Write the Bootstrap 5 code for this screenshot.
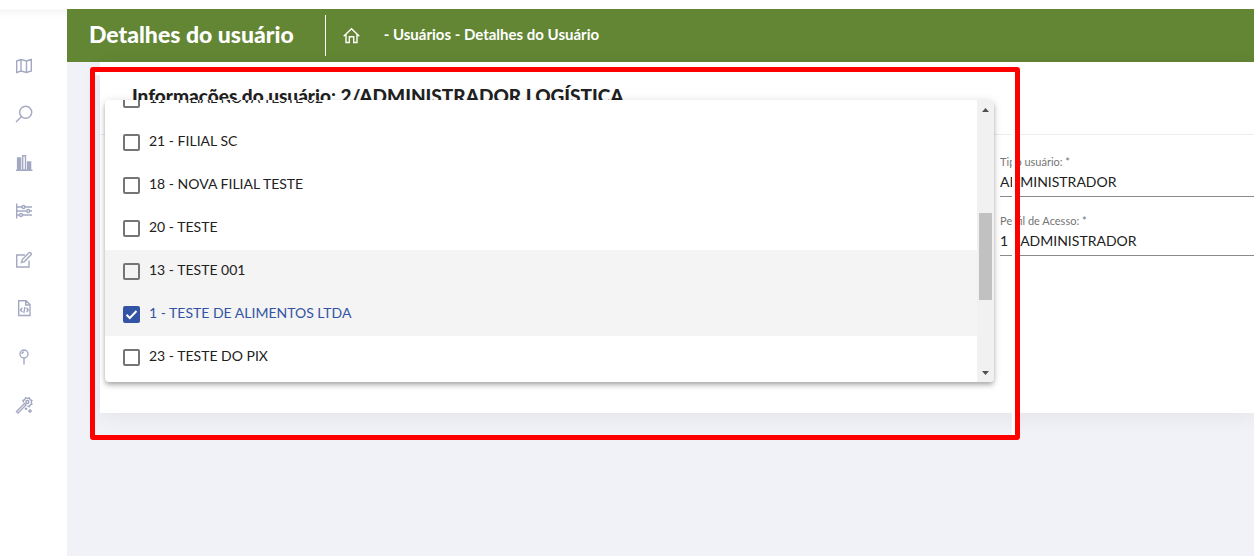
<!DOCTYPE html>
<html lang="pt-BR">
<head>
<meta charset="utf-8">
<meta name="viewport" content="width=device-width, initial-scale=1">
<title>Detalhes do usuário</title>
<link href="https://cdn.jsdelivr.net/npm/bootstrap@5.3.0/dist/css/bootstrap.min.css" rel="stylesheet">
<script src="https://cdn.jsdelivr.net/npm/bootstrap@5.3.0/dist/js/bootstrap.bundle.min.js" defer></script>
<style>
  body { font-family: Lato, "Liberation Sans", sans-serif; color: #212121; background: #f1f2f7; }
  .app { min-height: 100vh; }
  .side { width: 67px; padding: 57px 0 0 15px; color: #a3a9c2; background: linear-gradient(#fff 9px, #f6f6f6 10px, #fff 18px); }
  .side ul { height: 357px; }
  .side a { display: block; line-height: 0; color: inherit; }
  .side svg { width: 18px; height: 18px; }
  svg { fill: none; stroke: currentColor; stroke-width: 1.4; }
  main { border-top: 9px solid #fff; }
  .subhead { height: 53px; padding-left: 22px; background: #628634; color: #fff; }
  .subhead h1 { font-size: 23px; line-height: 30px; font-weight: 900; padding: 0 31px 4px 0; }
  .subhead .divider { width: 1px; height: 41px; background: #fff; margin-right: 17px; }
  .subhead .home { line-height: 0; color: #fff; }
  .subhead .trail { font-size: 15px; line-height: 20px; font-weight: 700; margin-left: 24px; padding-bottom: 4px; }
  .panel { margin-left: 33px; background: #fff; box-shadow: 0 4px 20px rgba(0,0,0,.06); }
  .panel-title { height: 73px; padding: 21px 32px 0; border-bottom: 1px solid #ebedf2; }
  .panel-title h2 { font-size: 19px; line-height: 26px; font-weight: 900; }
  .fields { padding: 20px 0 140px 78%; }
  .field { height: 59px; }
  .field label { display: block; font-size: 11px; line-height: 14px; color: #757575; }
  .field select { display: block; width: 100%; height: 28px; border: 0; border-bottom: 1px solid #8a8a8a; border-radius: 0; padding: 0 0 2px; appearance: none; background: none; font-size: 14px; color: #212121; }
  .marker { left: -10px; top: 5px; bottom: -27px; width: calc(78% + 30px); border: 5px solid #f00; border-radius: 3px; box-shadow: inset -3px 3px #fff; pointer-events: none; }
  .options { left: 5px; top: 38px; width: calc(78% - 11px); height: 282px; background: #fff; border-radius: 4px; overflow: hidden; box-shadow: 0 2px 4px -1px rgba(0,0,0,.2), 0 4px 5px rgba(0,0,0,.14), 0 1px 10px rgba(0,0,0,.12); }
  .choices { padding-bottom: 3px; overflow: hidden; }
  .choice { flex: 0 0 43px; padding-left: 18px; gap: 9px; font-size: 14px; }
  .choice label { line-height: 20px; padding-bottom: 3px; }
  .choice input { appearance: none; width: 17px; height: 17px; margin: 0; border: 2px solid #757575; border-radius: 2px; }
  .choice input:checked { border-color: #3353a4; background: #3353a4 url("data:image/svg+xml,%3Csvg xmlns='http://www.w3.org/2000/svg' viewBox='0 0 13 13'%3E%3Cpath d='M1.5 6.7l3.3 3.3 6.7-7' fill='none' stroke='%23fff' stroke-width='2'/%3E%3C/svg%3E"); }
  .choice.shade { background: #f4f4f4; }
  .choice.picked { color: #3353a4; }
  .scroller { width: 17px; background: #f1f1f1; padding: 8px 2px 7px; }
  .scroller .thumb { height: 87px; margin-top: 101px; margin-bottom: auto; background: #c1c1c1; }
  .scroller svg { display: block; width: 7px; height: 4px; margin: 0 auto; fill: #505050; stroke: none; }
</style>
</head>
<body>
<div class="app d-flex">
  <nav class="side flex-shrink-0" aria-label="Menu">
    <ul class="list-unstyled d-flex flex-column justify-content-between m-0">
      <li><a href="#" aria-label="Mapa"><svg viewBox="0 0 18 18"><path d="M1.700 4L6 2.500l5.500 1.500L16.300 2.500v11.500L11.500 15.500 6 14l-4.300 1.500zM6 2.500V14M11.500 4v11.500"/></svg></a></li>
      <li><a href="#" aria-label="Pesquisar"><svg viewBox="0 0 18 18"><circle cx="10.700" cy="7.300" r="6"/><path d="M6.300 11.700L1 17"/></svg></a></li>
      <li><a href="#" aria-label="Relatórios"><svg viewBox="0 0 18 18"><path d="M1 16.300h16.500"/><path d="M2.600 4h3v12h-3zM12.600 8h3v8h-3z" fill="currentColor"/><path d="M7.700 1.700h2.800V16H7.700z"/></svg></a></li>
      <li><a href="#" aria-label="Filtros"><svg viewBox="0 0 18 18"><path d="M1.700 1.500v15M2 5h5M10 5h7M2 9h9.500M15 9h2M2 13h2.500M8 13h9"/><circle cx="8.500" cy="5" r="1.500"/><circle cx="13.200" cy="9" r="1.500"/><circle cx="6" cy="13" r="1.500"/></svg></a></li>
      <li><a href="#" aria-label="Editar"><svg viewBox="0 0 18 18"><path d="M10 4H1.700v12H14V9.500"/><path d="M6.500 11.500l.8-3L14 1.800c1.300-1 3 .7 2 2L9.500 10.600z"/></svg></a></li>
      <li><a href="#" aria-label="Código"><svg viewBox="0 0 18 18"><path d="M3.700 1.700H11L15 5.500v11H3.700zM10.700 1.700V6H15M7.300 8.700L5.500 11l1.800 2M11.500 8.700l1.800 2.300-1.800 2M10 8l-1.200 6"/></svg></a></li>
      <li><a href="#" aria-label="Locais"><svg viewBox="0 0 18 18"><circle cx="9" cy="6" r="4"/><path d="M9 10v6.500M7 6c0-1.300.7-2 2-2"/></svg></a></li>
      <li><a href="#" aria-label="Ferramentas"><svg viewBox="0 0 18 18"><path d="M1.500 15.500l8-8 1.500 1.500-8 8z"/><path d="M8.500 6.500L8 4.500l1.700-.8.800-1.900 1.900.6 1.900-.6.700 1.900 1.900.8-.7 1.900.7 1.800-1.900.8-.7 1.700-2-.6"/><circle cx="12.300" cy="6" r="1.500"/><path d="M15 13v4M13 15h4M11 11.500v2.500M9.800 12.800h2.500"/></svg></a></li>
    </ul>
  </nav>

  <main class="flex-grow-1">
    <header class="subhead d-flex align-items-center">
      <h1 class="m-0 text-nowrap">Detalhes do usuário</h1>
      <span class="divider"></span>
      <a class="home" href="#" aria-label="Início"><svg width="17" height="17" viewBox="0 0 17 17"><path d="M.7 9.300L8.500 1.700l7.800 7.600M3 7.500v8h3.300V9.700h4.400v5.800H14v-8"/></svg></a>
      <span class="trail text-nowrap">- Usuários - Detalhes do Usuário</span>
    </header>

    <section class="panel position-relative">
      <div class="panel-title"><h2 class="m-0 text-nowrap">Informações do usuário: 2/ADMINISTRADOR LOGÍSTICA</h2></div>
      <form class="fields">
        <div class="field"><label for="tipo">Tipo usuário: *</label><select id="tipo"><option>ADMINISTRADOR</option></select></div>
        <div class="field"><label for="perfil">Perfil de Acesso: *</label><select id="perfil"><option>1 - ADMINISTRADOR</option></select></div>
      </form>

      <div class="options position-absolute d-flex">
        <div class="choices d-flex flex-column justify-content-end flex-grow-1">
          <div class="choice d-flex align-items-center"><input type="checkbox" id="f11"><label for="f11">11 - FILIAL NOVA TESTE 02</label></div>
          <div class="choice d-flex align-items-center"><input type="checkbox" id="f21"><label for="f21">21 - FILIAL SC</label></div>
          <div class="choice d-flex align-items-center"><input type="checkbox" id="f18"><label for="f18">18 - NOVA FILIAL TESTE</label></div>
          <div class="choice d-flex align-items-center"><input type="checkbox" id="f20"><label for="f20">20 - TESTE</label></div>
          <div class="choice shade d-flex align-items-center"><input type="checkbox" id="f13"><label for="f13">13 - TESTE 001</label></div>
          <div class="choice shade picked d-flex align-items-center"><input type="checkbox" id="f1" checked><label for="f1">1 - TESTE DE ALIMENTOS LTDA</label></div>
          <div class="choice d-flex align-items-center"><input type="checkbox" id="f23"><label for="f23">23 - TESTE DO PIX</label></div>
        </div>
        <div class="scroller d-flex flex-column flex-shrink-0" aria-hidden="true">
          <svg viewBox="0 0 7 4"><path d="M0 4L3.500 0 7 4z"/></svg>
          <div class="thumb"></div>
          <svg viewBox="0 0 7 4"><path d="M0 0l3.500 4L7 0z"/></svg>
        </div>
      </div>
      <div class="marker position-absolute"></div>
    </section>
  </main>
</div>
</body>
</html>
